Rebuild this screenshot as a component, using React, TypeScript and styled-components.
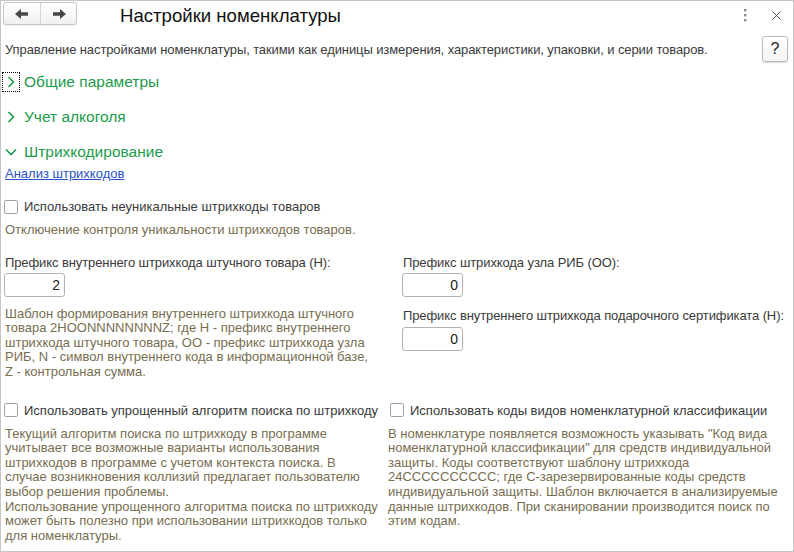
import React from "react";
import styled, { createGlobalStyle } from "styled-components";

const Global = createGlobalStyle`
  html, body { margin: 0; padding: 0; background: #fff; }
  body { font-family: Arial, "Liberation Sans", sans-serif; }
  * { box-sizing: border-box; }
`;

const Window = styled.div`
  width: 794px;
  height: 552px;
  border: 1px solid #c6c6c6;
  background: #fff;
  overflow: hidden;
  display: flex;
  flex-direction: column;
  font-family: Arial, "Liberation Sans", sans-serif;
  font-size: 13px;
  color: #3a3a3a;
`;

const Header = styled.div`
  display: flex;
  align-items: flex-start;
  height: 34px;
  padding: 1px 0 0 2px;
`;

const NavGroup = styled.div`
  display: flex;
  height: 23px;
  border: 1px solid #c4c4c4;
  border-radius: 3px;
  background: linear-gradient(#ffffff, #f1f1f1);
  box-shadow: 0 1px 1px rgba(0, 0, 0, 0.08);
`;

const NavButton = styled.div<{ $divider?: boolean }>`
  width: 36px;
  display: flex;
  align-items: center;
  justify-content: center;
  border-left: ${(p) => (p.$divider ? "1px solid #d6d6d6" : "none")};
`;

const Title = styled.div`
  margin-left: 43px;
  padding-top: 3px;
  font-size: 18.6px;
  color: #111;
  flex: 1;
`;

const HeaderTools = styled.div`
  display: flex;
  align-items: center;
  gap: 25px;
  padding: 7px 12px 0 0;
`;

const Content = styled.div`
  padding: 0 5px 0 3px;
  display: flex;
  flex-direction: column;
`;

const DescRow = styled.div`
  display: flex;
  align-items: center;
  justify-content: space-between;
  height: 27px;
`;

const DescText = styled.span`
  padding-left: 1px;
  padding-top: 1px;
  letter-spacing: -0.1px;
`;

const HelpButton = styled.div`
  width: 26px;
  height: 26px;
  border: 1px solid #b9b9b9;
  border-radius: 3px;
  background: linear-gradient(#ffffff, #f3f3f3);
  box-shadow: 0 1px 1px rgba(0, 0, 0, 0.15);
  display: flex;
  align-items: center;
  justify-content: center;
  font-size: 16px;
  color: #222;
`;

const Groups = styled.div`
  display: flex;
  flex-direction: column;
  gap: 15px;
  padding-top: 10px;
`;

const GroupHeader = styled.div`
  display: flex;
  align-items: center;
  height: 20px;
  font-size: 15.5px;
  color: #1c9b4d;
`;

const Chevron = styled.span<{ $focus?: boolean }>`
  width: 16px;
  height: 18px;
  margin-left: -1px;
  margin-right: 5px;
  display: flex;
  align-items: center;
  justify-content: center;
  outline: ${(p) => (p.$focus ? "1px dotted #000" : "none")};
`;

const Link = styled.a`
  margin-top: 4px;
  line-height: 15px;
  color: #2652c4;
  text-decoration: underline;
  align-self: flex-start;
  padding-left: 1px;
`;

const CheckRow = styled.label<{ $mt: number; $pl?: number }>`
  display: flex;
  align-items: center;
  gap: 6px;
  margin-top: ${(p) => p.$mt}px;
  padding-left: ${(p) => p.$pl ?? 0}px;
  line-height: 15px;
  color: #3a3a3a;
  white-space: nowrap;
`;

const Box = styled.span`
  width: 14px;
  height: 14px;
  border: 1px solid #a3a3a3;
  border-radius: 2px;
  background: #fff;
  flex: none;
`;

const Note = styled.div<{ $mt: number }>`
  margin-top: ${(p) => p.$mt}px;
  line-height: 14.6px;
  color: #776d4f;
  padding-left: 1px;
`;

const TwoCol = styled.div<{ $left: number; $mt: number }>`
  display: grid;
  grid-template-columns: ${(p) => p.$left}px 1fr;
  margin-top: ${(p) => p.$mt}px;
`;

const Col = styled.div`
  display: flex;
  flex-direction: column;
`;

const FieldLabel = styled.div<{ $mt: number }>`
  margin-top: ${(p) => p.$mt}px;
  line-height: 15px;
  padding-left: 1px;
  white-space: nowrap;
  letter-spacing: -0.1px;
`;

const NumInput = styled.div<{ $mt: number }>`
  margin-top: ${(p) => p.$mt}px;
  width: 61px;
  height: 24px;
  border: 1px solid #b3b3b3;
  border-radius: 3px;
  display: flex;
  align-items: center;
  justify-content: flex-end;
  padding-right: 4px;
  font-size: 14px;
  color: #222;
`;

const ArrowLeft = () => (
  <svg width="14" height="10" viewBox="0 0 14 10">
    <path d="M0 5 L6 0 L6 3.3 L13 3.3 L13 6.7 L6 6.7 L6 10 Z" fill="#474747" />
  </svg>
);
const ArrowRight = () => (
  <svg width="14" height="10" viewBox="0 0 14 10">
    <path d="M14 5 L8 0 L8 3.3 L1 3.3 L1 6.7 L8 6.7 L8 10 Z" fill="#474747" />
  </svg>
);
const Kebab = () => (
  <svg width="4" height="13" viewBox="0 0 4 13">
    <rect x="1" y="0" width="2.4" height="2.4" fill="#8a8a8a" />
    <rect x="1" y="5" width="2.4" height="2.4" fill="#8a8a8a" />
    <rect x="1" y="10" width="2.4" height="2.4" fill="#8a8a8a" />
  </svg>
);
const Close = () => (
  <svg width="9" height="9" viewBox="0 0 9 9">
    <path d="M0.5 0.5 L8.5 8.5 M8.5 0.5 L0.5 8.5" stroke="#555" strokeWidth="1" />
  </svg>
);
const ChevronRight = () => (
  <svg width="8" height="12" viewBox="0 0 8 12">
    <path d="M1.5 1 L6.5 6 L1.5 11" fill="none" stroke="#1c9b4d" strokeWidth="1.6" />
  </svg>
);
const ChevronDown = () => (
  <svg width="12" height="8" viewBox="0 0 12 8">
    <path d="M1 1.5 L6 6.5 L11 1.5" fill="none" stroke="#1c9b4d" strokeWidth="1.6" />
  </svg>
);

export default function App() {
  return (
    <>
      <Global />
      <Window>
        <Header>
          <NavGroup>
            <NavButton>
              <ArrowLeft />
            </NavButton>
            <NavButton $divider>
              <ArrowRight />
            </NavButton>
          </NavGroup>
          <Title>Настройки номенклатуры</Title>
          <HeaderTools>
            <Kebab />
            <Close />
          </HeaderTools>
        </Header>
        <Content>
          <DescRow>
            <DescText>
              Управление настройками номенклатуры, такими как единицы измерения, характеристики, упаковки, и серии товаров.
            </DescText>
            <HelpButton>?</HelpButton>
          </DescRow>
          <Groups>
            <GroupHeader>
              <Chevron $focus>
                <ChevronRight />
              </Chevron>
              Общие параметры
            </GroupHeader>
            <GroupHeader>
              <Chevron>
                <ChevronRight />
              </Chevron>
              Учет алкоголя
            </GroupHeader>
            <GroupHeader>
              <Chevron>
                <ChevronDown />
              </Chevron>
              Штрихкодирование
            </GroupHeader>
          </Groups>
          <Link href="#">Анализ штрихкодов</Link>
          <CheckRow $mt={18}>
            <Box />
            Использовать неуникальные штрихкоды товаров
          </CheckRow>
          <Note $mt={9}>Отключение контроля уникальности штрихкодов товаров.</Note>
          <TwoCol $left={398} $mt={17}>
            <Col>
              <FieldLabel $mt={0}>Префикс внутреннего штрихкода штучного товара (Н):</FieldLabel>
              <NumInput $mt={3}>2</NumInput>
              <Note $mt={10}>
                Шаблон формирования внутреннего штрихкода штучного
                <br />
                товара 2НООNNNNNNNNZ; где Н - префикс внутреннего
                <br />
                штрихкода штучного товара, ОО - префикс штрихкода узла
                <br />
                РИБ, N - символ внутреннего кода в информационной базе,
                <br />Z - контрольная сумма.
              </Note>
            </Col>
            <Col>
              <FieldLabel $mt={0}>Префикс штрихкода узла РИБ (ОО):</FieldLabel>
              <NumInput $mt={3}>0</NumInput>
              <FieldLabel $mt={11}>Префикс внутреннего штрихкода подарочного сертификата (Н):</FieldLabel>
              <NumInput $mt={4}>0</NumInput>
            </Col>
          </TwoCol>
          <TwoCol $left={383} $mt={23}>
            <Col>
              <CheckRow $mt={0}>
                <Box />
                Использовать упрощенный алгоритм поиска по штрихкоду
              </CheckRow>
              <Note $mt={9}>
                Текущий алгоритм поиска по штрихкоду в программе
                <br />
                учитывает все возможные варианты использования
                <br />
                штрихкодов в программе с учетом контекста поиска. В
                <br />
                случае возникновения коллизий предлагает пользователю
                <br />
                выбор решения проблемы.
                <br />
                Использование упрощенного алгоритма поиска по штрихкоду
                <br />
                может быть полезно при использовании штрихкодов только
                <br />
                для номенклатуры.
              </Note>
            </Col>
            <Col>
              <CheckRow $mt={0} $pl={3}>
                <Box />
                Использовать коды видов номенклатурной классификации
              </CheckRow>
              <Note $mt={9}>
                В номенклатуре появляется возможность указывать "Код вида
                <br />
                номенклатурной классификации" для средств индивидуальной
                <br />
                защиты. Коды соответствуют шаблону штрихкода
                <br />
                24СССССССССС; где С-зарезервированные коды средств
                <br />
                индивидуальной защиты. Шаблон включается в анализируемые
                <br />
                данные штрихкодов. При сканировании производится поиск по
                <br />
                этим кодам.
              </Note>
            </Col>
          </TwoCol>
        </Content>
      </Window>
    </>
  );
}
